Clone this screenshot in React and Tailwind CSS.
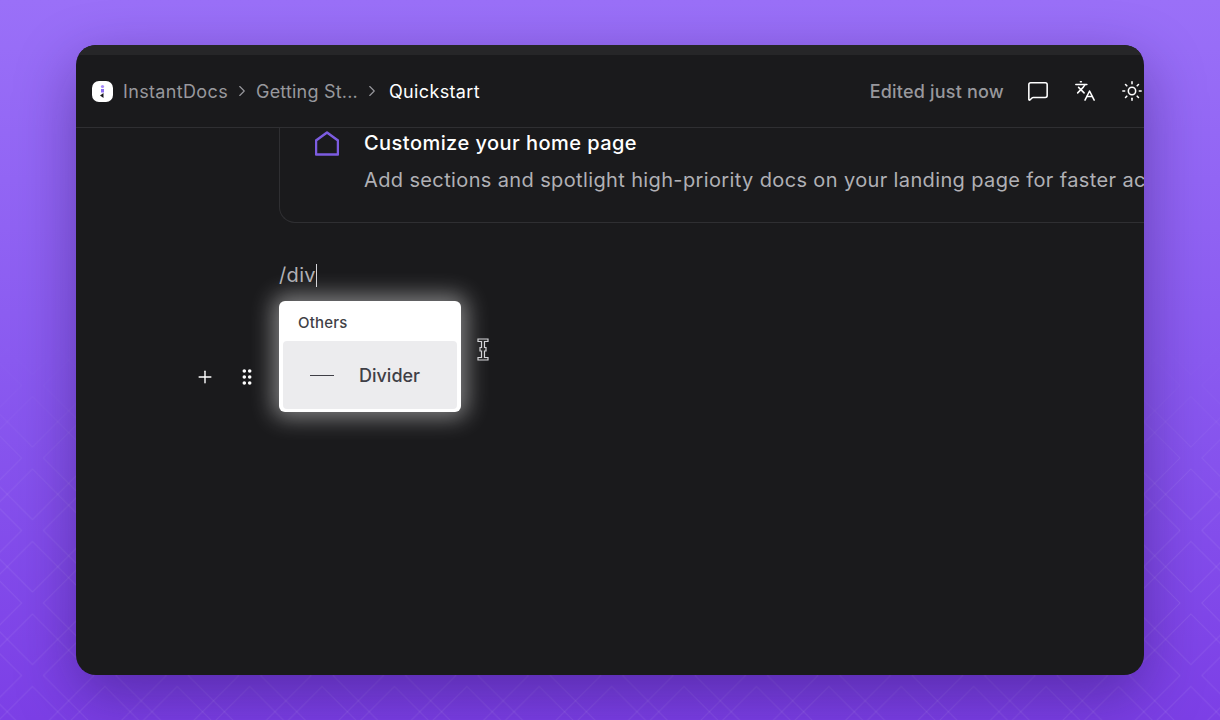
import React from 'react';
import { Plus, MessageSquare, Languages, Sun, ChevronRight } from 'lucide-react';

function Backdrop() {
  return (
    <svg className="absolute inset-0 h-full w-full [mask-image:linear-gradient(to_bottom,transparent_45%,black_72%)]">
      <defs>
        <pattern id="diamonds" x="32.5" y="458" width="72.4" height="72.5" patternUnits="userSpaceOnUse">
          <g fill="none" stroke="#ffffff" strokeOpacity="0.085" strokeWidth="1">
            <path d="M0 -61.5 L61.5 0 L0 61.5 L-61.5 0 Z" />
            <path d="M72.4 -61.5 L133.9 0 L72.4 61.5 L10.9 0 Z" />
            <path d="M0 11 L61.5 72.5 L0 134 L-61.5 72.5 Z" />
            <path d="M72.4 11 L133.9 72.5 L72.4 134 L10.9 72.5 Z" />
          </g>
        </pattern>
      </defs>
      <rect width="100%" height="100%" fill="url(#diamonds)" />
    </svg>
  );
}

function Logo() {
  return (
    <svg width="21" height="21" viewBox="0 0 21 21">
      <rect width="21" height="21" rx="7" fill="#ffffff" />
      <circle cx="10.5" cy="5.5" r="1.6" fill="#a78bfa" />
      <rect x="9" y="8" width="3" height="3.5" fill="#8b6cf0" />
      <path d="M11.5 12 L11.5 17 L8 14.5 Z" fill="#18181b" />
    </svg>
  );
}

function HomeIcon() {
  return (
    <svg className="shrink-0" width="24" height="25" viewBox="0 0 24 25" fill="none" stroke="#7c5ce0" strokeWidth="2.5" strokeLinejoin="round">
      <path d="M12 1.5 L23 9.5 V23.5 H1 V9.5 Z" />
    </svg>
  );
}

function DragDots() {
  return (
    <svg width="10" height="18" viewBox="0 0 10 18" fill="#ffffff">
      <circle cx="2.3" cy="3" r="1.8" />
      <circle cx="7.7" cy="3" r="1.8" />
      <circle cx="2.3" cy="9" r="1.8" />
      <circle cx="7.7" cy="9" r="1.8" />
      <circle cx="2.3" cy="15" r="1.8" />
      <circle cx="7.7" cy="15" r="1.8" />
    </svg>
  );
}

function IBeam() {
  return (
    <svg width="12" height="23" viewBox="0 0 12 23" fill="#2a2a2a" stroke="#d4d4d8" strokeWidth="1.2">
      <path d="M1 1 H11 V3.5 H7.5 V9.5 H9 V13 H7.5 V19.5 H11 V22 H1 V19.5 H4.5 V13 H3 V9.5 H4.5 V3.5 H1 Z" />
    </svg>
  );
}

function SlashMenu() {
  return (
    <div className="h-[111px] w-[182px] rounded-md bg-white p-[4px] shadow-[0_0_22px_6px_rgba(255,255,255,0.45)]">
      <div className="flex h-[36px] items-center pl-[15px] text-[15px] font-medium tracking-[0.2px] text-[#3f3f46]">Others</div>
      <div className="flex h-[68px] items-center gap-[25px] rounded bg-[#ececee] pl-[27px]">
        <span className="h-px w-[24px] bg-[#3f3f46]" />
        <span className="text-[18px] font-medium text-[#3f3f46]">Divider</span>
      </div>
    </div>
  );
}

export default function App() {
  return (
    <div className="relative h-[720px] w-[1220px] overflow-hidden bg-[linear-gradient(180deg,#9a70f8_0%,#8a5af0_50%,#7c3fe6_100%)] pl-[76px] pt-[45px] font-['Inter',sans-serif]">
      <Backdrop />
      <div className="relative flex h-[630px] w-[1068px] flex-col overflow-hidden rounded-[20px] bg-[#1a1a1c] shadow-[0_20px_60px_rgba(30,10,80,0.4)]">
        <div className="h-[10px] shrink-0 bg-[#262628]" />

        <header className="flex h-[73px] shrink-0 items-center justify-between border-b border-b-[#2f2f32] pl-[16px] pr-px">
          <div className="flex items-center text-[18px] tracking-[0.35px]">
            <Logo />
            <span className="ml-[10px] text-[#98989d]">InstantDocs</span>
            <ChevronRight className="mx-[5px] text-[#98989d]" size={18} strokeWidth={1.5} />
            <span className="tracking-[0.2px] text-[#98989d]">Getting St...</span>
            <ChevronRight className="ml-[5px] mr-[8px] text-[#98989d]" size={18} strokeWidth={1.5} />
            <span className="text-white">Quickstart</span>
          </div>
          <div className="flex items-center text-white">
            <span className="mr-[23px] text-[18px] font-medium tracking-[0.2px] text-[#98989d]">Edited just now</span>
            <MessageSquare size={22} strokeWidth={1.7} />
            <Languages className="ml-[25px]" size={22} strokeWidth={1.7} />
            <Sun className="ml-[25px]" size={22} strokeWidth={1.7} />
          </div>
        </header>

        <main className="flex-1 overflow-hidden">
          <section className="ml-[203px] flex h-[95px] w-[1000px] rounded-bl-2xl border-b border-l border-[#2f2f32] pl-[35px] pt-[3px]">
            <HomeIcon />
            <div className="ml-[25px]">
              <div className="whitespace-nowrap text-[20px] font-medium leading-[24px] tracking-[0.45px] text-white">Customize your home page</div>
              <div className="mt-[13px] whitespace-nowrap text-[20px] leading-[24px] tracking-[0.37px] text-[#b0b0b5]">Add sections and spotlight high-priority docs on your landing page for faster ac</div>
            </div>
          </section>

          <div className="ml-[203px] mt-[40px] flex h-[24px] items-center text-[20px] tracking-[0.35px] text-[#b0b0b5]">
            /div<span className="h-[23px] w-px bg-[#d4d4d8]" />
          </div>

          <div className="relative mt-[14px] flex items-start">
            <div className="flex w-[203px] items-center justify-end gap-[27px] pr-[27px] pt-[66px] text-white">
              <Plus size={20} strokeWidth={1.7} />
              <DragDots />
            </div>
            <SlashMenu />
            <div className="absolute left-[401px] top-[37px]">
              <IBeam />
            </div>
          </div>
        </main>
      </div>
    </div>
  );
}
